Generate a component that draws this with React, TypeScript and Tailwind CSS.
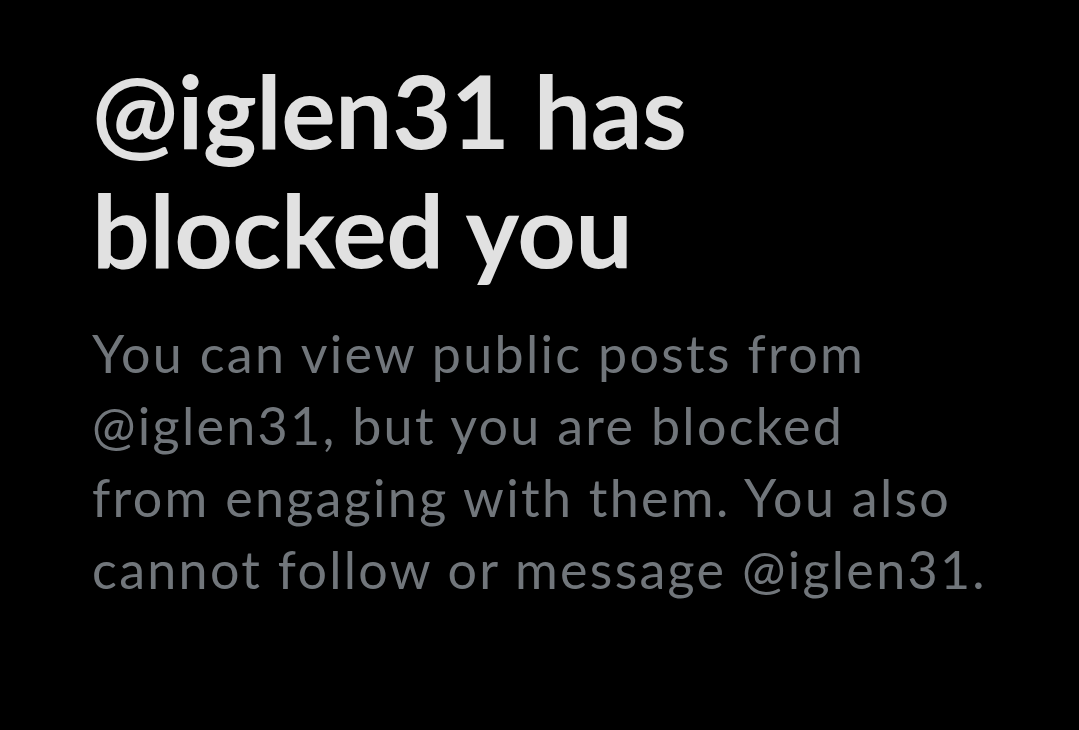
export default function App() {
  return (
    <div className="w-[1079px] h-[730px] bg-black overflow-hidden pl-[92px] pt-[50px]" style={{ fontFamily: 'Lato, "Liberation Sans", Arial, sans-serif' }}>
      <h1 className="text-[102px] leading-[119px] font-bold text-[#e1e1e1] tracking-[-0.5px]">
        @iglen31 has
        <br />
        blocked you
      </h1>
      <p className="mt-[29px] text-[52px] leading-[72px] text-[#71767b] tracking-[2.3px] w-[980px]">
        You can view public posts from
        <br />
        @iglen31, but you are blocked
        <br />
        from engaging with them. You also
        <br />
        cannot follow or message @iglen31.
      </p>
    </div>
  );
}
